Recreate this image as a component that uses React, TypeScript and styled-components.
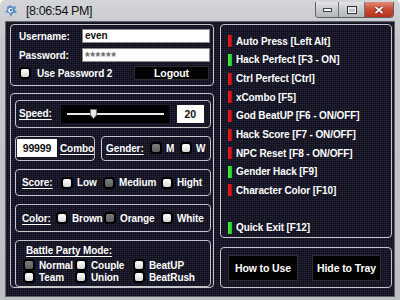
import styled, { createGlobalStyle } from 'styled-components';

const GlobalStyle = createGlobalStyle`
  html, body { margin: 0; padding: 0; background: #fff; }
  body { font-family: "Liberation Sans", Arial, sans-serif; }
`;

const Window = styled.div`
  width: 400px;
  height: 300px;
  box-sizing: border-box;
  display: flex;
  flex-direction: column;
  padding: 0 6px 4px;
  background: linear-gradient(#d3d5d8, #c3c6ca 40px, #bcc0c4);
  border-radius: 5px 5px 0 0;
`;

const TitleBar = styled.div`
  height: 22px;
  display: flex;
  align-items: center;
  margin: 0 -6px;
  padding: 0 6px 0 4px;
`;

const TitleText = styled.span`
  margin-left: 8px;
  font-size: 12.5px;
  letter-spacing: -0.4px;
  color: #111;
`;

const WinButtons = styled.div`
  margin-left: auto;
  align-self: flex-start;
  margin-top: 2px;
  display: flex;
  border: 1px solid #5b5f66;
  border-top: none;
  border-radius: 0 0 4px 4px;
  overflow: hidden;
`;

const WinButton = styled.div<{ $close?: boolean; $w: number }>`
  width: ${(p) => p.$w}px;
  height: 15px;
  display: flex;
  align-items: center;
  justify-content: center;
  background: ${(p) =>
    p.$close
      ? 'linear-gradient(#e28a78, #c94a32 50%, #b8321c)'
      : 'linear-gradient(#e2e4e7, #c6c9cd 50%, #b3b7bc)'};
  border-left: ${(p) => (p.$close ? '1px solid #6b3a30' : 'none')};
  & + & { border-left: 1px solid #6f737a; }
`;

const Body = styled.div`
  flex: 1;
  display: flex;
  gap: 6px;
  padding: 2px 2px 8px 4px;
  background-color: #0b0b17;
  background-image:
    linear-gradient(90deg, rgba(90, 90, 120, 0.18) 1px, transparent 1px),
    linear-gradient(rgba(90, 90, 120, 0.18) 1px, transparent 1px);
  background-size: 2px 2px;
  box-shadow: 0 0 0 1px #60646a;
  color: #fff;
  font-size: 10px;
  font-weight: bold;
  letter-spacing: -0.1px;
`;

const Column = styled.div<{ $w: number; $gap: number }>`
  width: ${(p) => p.$w}px;
  display: flex;
  flex-direction: column;
  gap: ${(p) => p.$gap}px;
`;

const Box = styled.div`
  box-sizing: border-box;
  border: 1px solid #c4c4cc;
  border-radius: 4px;
`;

const LoginBox = styled(Box)`
  height: 62px;
  display: grid;
  grid-template-columns: 63px 128px;
  grid-auto-rows: 14px;
  row-gap: 5px;
  align-items: center;
  padding: 4px 4px 0 8px;
`;

const TextInput = styled.div<{ $masked?: boolean }>`
  height: 14px;
  box-sizing: border-box;
  background: #fff;
  border: 1px solid #8a8a8a;
  padding: ${(p) => (p.$masked ? '3px 0 0 2px' : '0 0 0 2px')};
  line-height: ${(p) => (p.$masked ? '11px' : '12px')};
  color: ${(p) => (p.$masked ? '#6e6e6e' : '#111')};
  font-size: ${(p) => (p.$masked ? '12px' : '10px')};
  letter-spacing: ${(p) => (p.$masked ? '0.6px' : '-0.1px')};
`;

const CheckLine = styled.div`
  display: flex;
  align-items: center;
  gap: 8px;
  padding-left: 2px;
  margin-top: -2px;
  white-space: nowrap;
`;

const BlackButton = styled.div<{ $w: number; $h: number }>`
  width: ${(p) => p.$w}px;
  height: ${(p) => p.$h}px;
  box-sizing: border-box;
  display: flex;
  align-items: center;
  justify-content: center;
  background: #030303;
  border: 1px solid #2e2e34;
  color: #fff;
  font-size: 10.5px;
`;

const LogoutCell = styled.div`
  display: flex;
  justify-content: flex-end;
  padding-right: 1px;
  margin-top: -2px;
`;

const OuterBox = styled(Box)`
  flex: 1;
  margin-top: 1px;
  display: flex;
  flex-direction: column;
  gap: 8px;
  padding: 6px 2px 0 4px;
`;

const Row = styled.div`
  display: flex;
  gap: 6px;
`;

const SubBox = styled(Box)<{ $h: number; $pl: number; $w?: number }>`
  height: ${(p) => p.$h}px;
  ${(p) => (p.$w ? `width: ${p.$w}px;` : 'flex: 1;')}
  display: flex;
  align-items: center;
  padding-left: ${(p) => p.$pl}px;
`;

const Label = styled.span<{ $ml?: number }>`
  text-decoration: underline;
  text-underline-offset: 2px;
  margin-left: ${(p) => p.$ml ?? 0}px;
  flex-shrink: 0;
`;

const SliderWell = styled.div`
  width: 108px;
  height: 18px;
  margin: 0 8px 0 9px;
  background: #000;
  position: relative;
  display: flex;
  align-items: center;
  padding: 0 5px 0 6px;
  box-sizing: border-box;
`;

const Track = styled.div`
  flex: 1;
  height: 2px;
  background: #e8e8e8;
`;

const Thumb = styled.svg`
  position: absolute;
  left: 29px;
  top: 4px;
`;

const ValueBox = styled.div<{ $w: number }>`
  width: ${(p) => p.$w}px;
  height: 18px;
  box-sizing: border-box;
  background: #fff;
  color: #111;
  display: flex;
  align-items: center;
  justify-content: center;
  font-size: 10.5px;
`;

const Options = styled.div<{ $cols: string }>`
  display: grid;
  grid-template-columns: ${(p) => p.$cols};
  align-items: center;
`;

const Option = styled.div`
  display: flex;
  align-items: center;
  gap: 6px;
  white-space: nowrap;
`;

const Check = styled.span<{ $on?: boolean }>`
  width: 8px;
  height: 8px;
  border-radius: 2px;
  flex-shrink: 0;
  background: ${(p) =>
    p.$on ? 'linear-gradient(#7c7c7c, #5e5e5e)' : 'linear-gradient(#ffffff, #d6d6d6)'};
  box-shadow: 0 0 0 2px #000;
`;

const BattleBox = styled(Box)`
  height: 47px;
  padding: 4px 0 0 9px;
  display: flex;
  flex-direction: column;
`;

const BattleTitle = styled.span`
  text-decoration: underline;
  text-underline-offset: 2px;
  margin-left: 1px;
  margin-bottom: 3px;
`;

const BattleGrid = styled.div`
  display: grid;
  grid-template-columns: 52px 58px auto;
  grid-auto-rows: 12px;
  align-items: center;
`;

const HotkeyBox = styled(Box)`
  height: 214px;
  padding: 7px 0 0 7px;
  display: flex;
  flex-direction: column;
`;

const Hotkey = styled.div`
  height: 19px;
  display: flex;
  align-items: center;
  gap: 4px;
  white-space: nowrap;
`;

const Led = styled.span<{ $on: boolean }>`
  width: 4px;
  height: 12px;
  background: ${(p) =>
    p.$on ? 'linear-gradient(90deg, #4cf04c, #18c818)' : 'linear-gradient(90deg, #f02222, #b80808)'};
`;

const ActionBox = styled(Box)`
  flex: 1;
  display: flex;
  align-items: flex-start;
  gap: 14px;
  padding: 7px 0 0 7px;
`;

const hotkeys: [string, boolean][] = [
  ['Auto Press [Left Alt]', false],
  ['Hack Perfect [F3 - ON]', true],
  ['Ctrl Perfect [Ctrl]', false],
  ['xCombo [F5]', false],
  ['God BeatUP [F6 - ON/OFF]', false],
  ['Hack Score [F7 - ON/OFF]', false],
  ['NPC Reset [F8 - ON/OFF]', false],
  ['Gender Hack [F9]', true],
  ['Character Color [F10]', false],
];

const battleModes: [string, boolean][] = [
  ['Normal', true],
  ['Couple', false],
  ['BeatUP', false],
  ['Team', false],
  ['Union', false],
  ['BeatRush', false],
];

function AppIcon() {
  return (
    <svg width="14" height="14" viewBox="0 0 14 14">
      <path d="M3 3 L6 1 L9 3 L12 2 L11 6 L13 9 L9 9 L7 13 L5 9 L1 8 L3 6 Z" fill="#5d8fc8" />
      <path d="M5 4 L8 4 L9 7 L6 9 L4 7 Z" fill="#eaf2fb" />
      <circle cx="7" cy="6" r="1" fill="#2a4e80" />
    </svg>
  );
}

export default function App() {
  return (
    <>
      <GlobalStyle />
      <Window>
        <TitleBar>
          <AppIcon />
          <TitleText>[8:06:54 PM]</TitleText>
          <WinButtons>
            <WinButton $w={22}>
              <svg width="9" height="4"><rect x="0.5" y="0.5" width="8" height="3" fill="#fff" stroke="#444" /></svg>
            </WinButton>
            <WinButton $w={25}>
              <svg width="10" height="8"><rect x="0.5" y="0.5" width="9" height="7" fill="none" stroke="#333" /><rect x="1.5" y="2" width="7" height="4.5" fill="none" stroke="#fff" /></svg>
            </WinButton>
            <WinButton $close $w={28}>
              <svg width="10" height="8" viewBox="0 0 10 8">
                <path d="M1.5 1 L8.5 7 M8.5 1 L1.5 7" stroke="#5a1a10" strokeWidth="3" />
                <path d="M1.5 1 L8.5 7 M8.5 1 L1.5 7" stroke="#fff" strokeWidth="1.8" />
              </svg>
            </WinButton>
          </WinButtons>
        </TitleBar>
        <Body>
          <Column $w={204} $gap={6}>
            <LoginBox>
              <span>Username:</span>
              <TextInput>even</TextInput>
              <span>Password:</span>
              <TextInput $masked>******</TextInput>
              <CheckLine>
                <Check />
                Use Password 2
              </CheckLine>
              <LogoutCell>
                <BlackButton $w={75} $h={14}>Logout</BlackButton>
              </LogoutCell>
            </LoginBox>
            <OuterBox>
              <SubBox $h={25} $pl={3}>
                <Label>Speed:</Label>
                <SliderWell>
                  <Track />
                  <Thumb width="7" height="10" viewBox="0 0 7 10">
                    <path d="M0.5 0.5 H6.5 V6 L3.5 9.5 L0.5 6 Z" fill="#e8e8e8" stroke="#777" />
                  </Thumb>
                </SliderWell>
                <ValueBox $w={27}>20</ValueBox>
              </SubBox>
              <Row>
                <SubBox $h={25} $pl={1} $w={80}>
                  <ValueBox $w={40}>99999</ValueBox>
                  <Label $ml={3}>Combo</Label>
                </SubBox>
                <SubBox $h={25} $pl={4}>
                  <Options $cols="46px 30px auto">
                    <Label>Gender:</Label>
                    <Option><Check $on />M</Option>
                    <Option><Check />W</Option>
                  </Options>
                </SubBox>
              </Row>
              <SubBox $h={25} $pl={6}>
                <Options $cols="41px 42px 58px auto">
                  <Label>Score:</Label>
                  <Option><Check />Low</Option>
                  <Option><Check $on />Medium</Option>
                  <Option><Check />Hight</Option>
                </Options>
              </SubBox>
              <SubBox $h={26} $pl={6}>
                <Options $cols="36px 48px 57px auto">
                  <Label>Color:</Label>
                  <Option><Check />Brown</Option>
                  <Option><Check $on />Orange</Option>
                  <Option><Check />White</Option>
                </Options>
              </SubBox>
              <BattleBox>
                <BattleTitle>Battle Party Mode:</BattleTitle>
                <BattleGrid>
                  {battleModes.map(([name, on]) => (
                    <Option key={name}>
                      <Check $on={on} />
                      {name}
                    </Option>
                  ))}
                </BattleGrid>
              </BattleBox>
            </OuterBox>
          </Column>
          <Column $w={172} $gap={9}>
            <HotkeyBox>
              {hotkeys.map(([text, on]) => (
                <Hotkey key={text}>
                  <Led $on={on} />
                  {text}
                </Hotkey>
              ))}
              <Hotkey />
              <Hotkey>
                <Led $on />
                Quick Exit [F12]
              </Hotkey>
            </HotkeyBox>
            <ActionBox>
              <BlackButton $w={70} $h={26}>How to Use</BlackButton>
              <BlackButton $w={69} $h={26}>Hide to Tray</BlackButton>
            </ActionBox>
          </Column>
        </Body>
      </Window>
    </>
  );
}
